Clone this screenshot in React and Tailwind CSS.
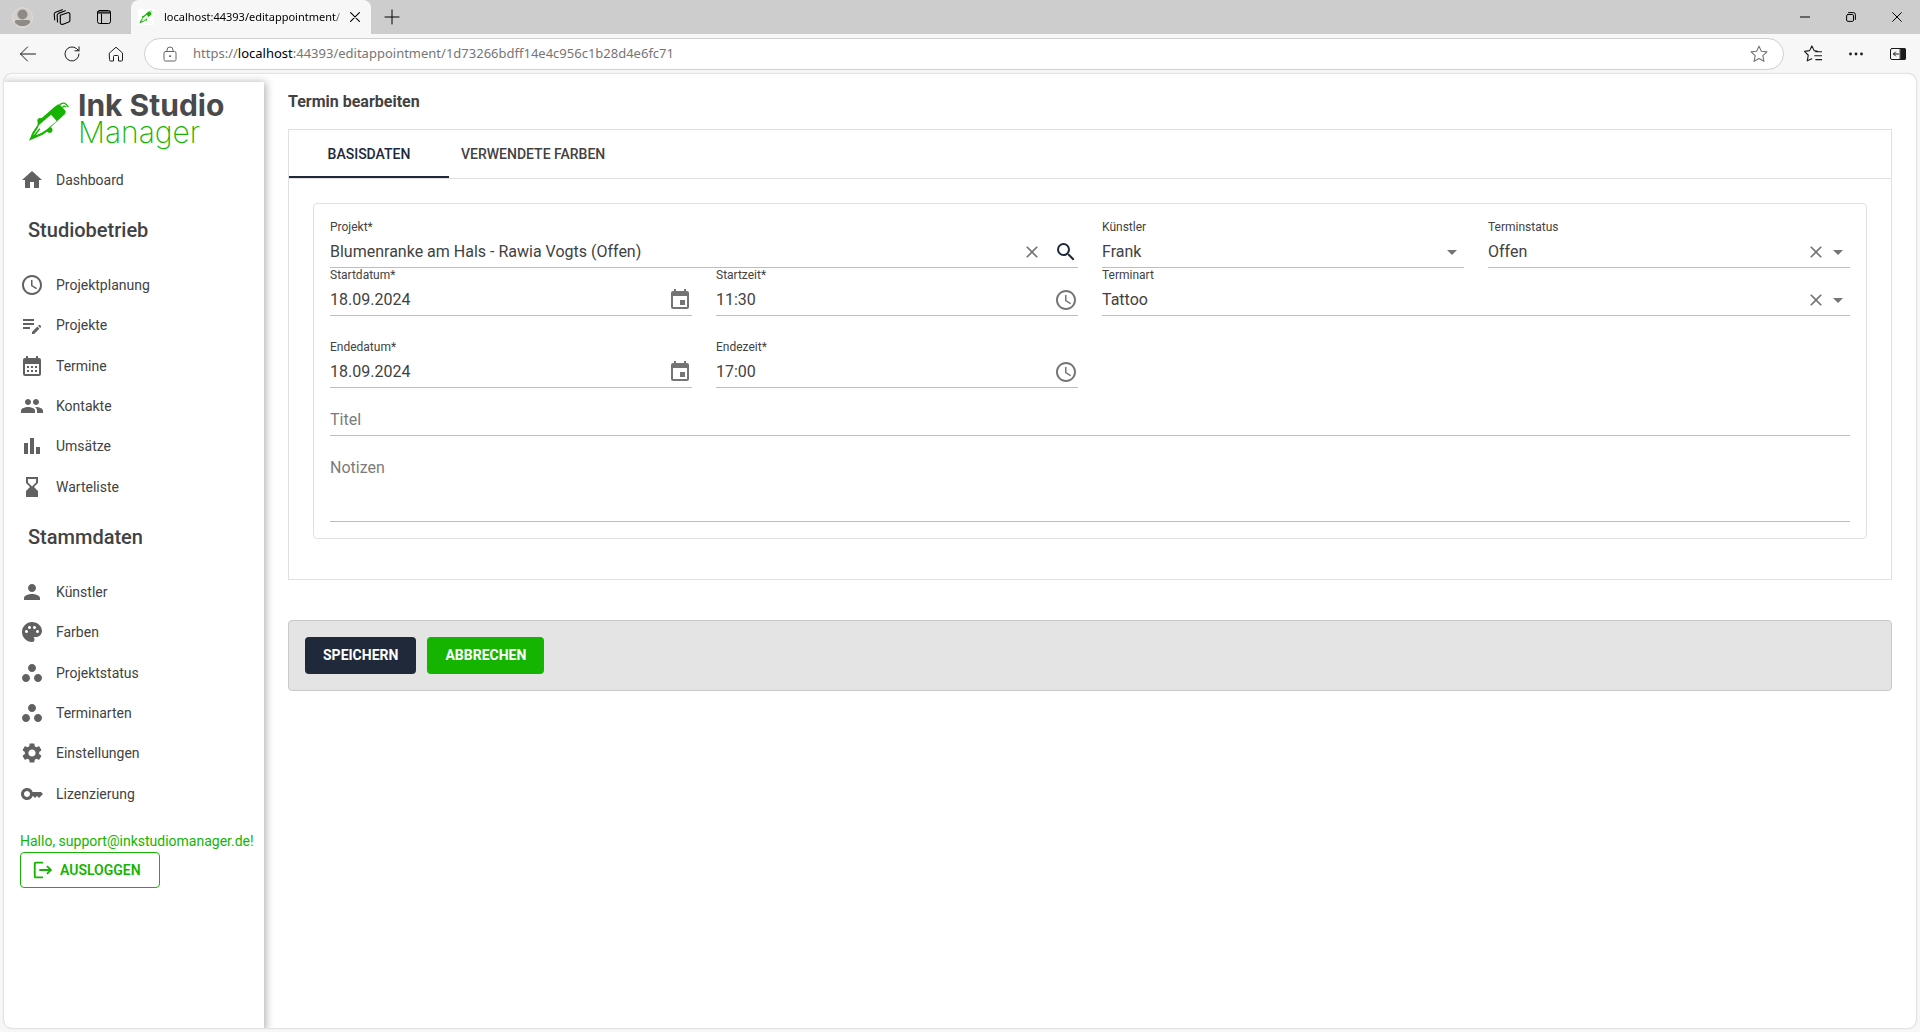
import React, { useState } from "react";
import {
  MdHome,
  MdAccessTime,
  MdEditNote,
  MdCalendarMonth,
  MdPeople,
  MdHourglassBottom,
  MdPerson,
  MdPalette,
  MdWorkspaces,
  MdSettings,
  MdKey,
  MdLogout,
  MdClear,
  MdSearch,
  MdEvent,
  MdArrowDropDown,
} from "react-icons/md";

function PenMark({ className }) {
  return (
    <svg viewBox="80 95 126 117" className={className} aria-hidden="true">
      <path fill="#14b400" d="M83 211l10-24 15-22 2-12 50-44 11-7 9 6 13 14-1 8-41 38-7 11-20 14z" />
      <circle cx="116" cy="151" r="8" fill="#14b400" />
      <circle cx="145" cy="179" r="8.500" fill="#14b400" />
      <path fill="#fff" d="M113 164l36-31 17 19-31 26-14 9-18 8 14-18-3-3-17 21-1-1 13-20z" />
      <path d="M174 107c2-9 14-11 20-5 4 3 6 5 7 9M184 112c2-5 6-6 11-2" fill="none" stroke="#14b400" strokeWidth="4" />
    </svg>
  );
}

function BarChartIcon({ className }) {
  return (
    <svg viewBox="0 0 24 24" fill="currentColor" className={className} aria-hidden="true">
      <path d="M4 9h4v11H4zM16 13h4v7h-4zM10 4h4v16h-4z" />
    </svg>
  );
}

function Stroke({ className, children, width = 1 }) {
  return (
    <svg
      viewBox="0 0 16 16"
      fill="none"
      stroke="currentColor"
      strokeWidth={width}
      strokeLinecap="round"
      strokeLinejoin="round"
      className={className}
      aria-hidden="true"
    >
      {children}
    </svg>
  );
}

const studio = [
  ["Projektplanung", MdAccessTime],
  ["Projekte", MdEditNote],
  ["Termine", MdCalendarMonth],
  ["Kontakte", MdPeople],
  ["Umsätze", BarChartIcon],
  ["Warteliste", MdHourglassBottom],
];

const masterData = [
  ["Künstler", MdPerson],
  ["Farben", MdPalette],
  ["Projektstatus", MdWorkspaces],
  ["Terminarten", MdWorkspaces],
  ["Einstellungen", MdSettings],
  ["Lizenzierung", MdKey],
];

function NavLink({ label, icon: Icon }) {
  return (
    <a href="#" className="flex min-h-10 items-center gap-3 pl-4 text-sm text-[#424242]">
      <Icon className="size-6 shrink-0 text-[#616161]" />
      <span>{label}</span>
    </a>
  );
}

function NavGroup({ title, items }) {
  return (
    <section>
      <h2 className="pt-[14px] pb-[19px] pl-6 text-xl leading-8 font-medium text-[#424242]">{title}</h2>
      <div className="grid min-h-[242px] auto-rows-fr">
        {items.map(([label, icon]) => (
          <NavLink key={label} label={label} icon={icon} />
        ))}
      </div>
    </section>
  );
}

function Sidebar() {
  return (
    <aside className="mt-2 w-[260px] shrink-0 bg-white shadow-[0_2px_8px_2px_rgba(0,0,0,0.3)]">
      <a href="#" aria-label="Ink Studio Manager" className="flex h-[78px] items-start gap-2 pt-[10px] pl-6">
        <PenMark className="mt-[10px] h-[39px] w-[42px]" />
        <span className="flex flex-col font-['Inter',sans-serif] text-[30px] leading-[27px]">
          <span className="font-bold text-[#4a4a4c]">Ink Studio</span>
          <span className="font-extralight text-[#14b400]">Manager</span>
        </span>
      </a>
      <nav aria-label="Hauptmenü">
        <NavLink label="Dashboard" icon={MdHome} />
        <NavGroup title="Studiobetrieb" items={studio} />
        <NavGroup title="Stammdaten" items={masterData} />
      </nav>
      <div className="pt-4 pl-4 text-[#14b400]">
        <p className="text-sm leading-[22px] whitespace-nowrap">Hallo, support@inkstudiomanager.de!</p>
        <button type="button" className="flex h-9 items-center gap-[6px] rounded border border-[#14b400] pr-[18px] pl-[11px] text-sm font-semibold">
          <MdLogout className="size-[22px]" />
          AUSLOGGEN
        </button>
      </div>
    </aside>
  );
}

function Field({ id, label, children, className = "" }) {
  return (
    <div className={`flex h-12 flex-col border-b border-[#bdbdbd] ${className}`}>
      <label htmlFor={id} className="h-[14px] text-xs leading-[14px]">
        {label}
      </label>
      <div className="flex h-[33px] items-center pt-[2px]">{children}</div>
    </div>
  );
}

function TextInput(props) {
  return <input {...props} className="h-full min-w-0 flex-1 bg-transparent text-base outline-none" />;
}

function IconButton({ label, onClick, children }) {
  return (
    <button type="button" aria-label={label} onClick={onClick} className="flex shrink-0 items-center justify-center text-[#757575]">
      {children}
    </button>
  );
}

function SelectField({ id, label, options, clearable, className }) {
  const [value, setValue] = useState(options[0]);
  return (
    <Field id={id} label={label} className={className}>
      <select
        id={id}
        value={value}
        onChange={(e) => setValue(e.target.value)}
        className="h-full min-w-0 flex-1 appearance-none bg-transparent text-base outline-none"
      >
        <option value=""></option>
        {options.map((o) => (
          <option key={o}>{o}</option>
        ))}
      </select>
      {clearable && (
        <IconButton label={`${label} leeren`} onClick={() => setValue("")}>
          <MdClear className="size-5" />
        </IconButton>
      )}
      <MdArrowDropDown className="pointer-events-none size-6 shrink-0 text-[#757575]" />
    </Field>
  );
}

function AppointmentForm() {
  const [project, setProject] = useState("Blumenranke am Hals - Rawia Vogts (Offen)");
  return (
    <div className="grid grid-cols-4 gap-x-6 rounded border border-[#e0e0e0] p-4">
      <Field id="project" label="Projekt*" className="col-span-2">
        <TextInput id="project" value={project} onChange={(e) => setProject(e.target.value)} />
        <div className="flex items-center gap-3">
          <IconButton label="Projekt leeren" onClick={() => setProject("")}>
            <MdClear className="size-5" />
          </IconButton>
          <IconButton label="Projekt suchen">
            <MdSearch className="size-6 text-[#20293a]" />
          </IconButton>
        </div>
      </Field>
      <SelectField id="artist" label="Künstler" options={["Frank"]} />
      <SelectField id="status" label="Terminstatus" options={["Offen"]} clearable />

      <Field id="start-date" label="Startdatum*">
        <TextInput id="start-date" defaultValue="18.09.2024" />
        <IconButton label="Startdatum wählen">
          <MdEvent className="size-6" />
        </IconButton>
      </Field>
      <Field id="start-time" label="Startzeit*">
        <TextInput id="start-time" defaultValue="11:30" />
        <IconButton label="Startzeit wählen">
          <MdAccessTime className="size-6" />
        </IconButton>
      </Field>
      <SelectField id="kind" label="Terminart" options={["Tattoo"]} clearable className="col-span-2" />

      <Field id="end-date" label="Endedatum*" className="mt-6">
        <TextInput id="end-date" defaultValue="18.09.2024" />
        <IconButton label="Endedatum wählen">
          <MdEvent className="size-6" />
        </IconButton>
      </Field>
      <Field id="end-time" label="Endezeit*" className="mt-6">
        <TextInput id="end-time" defaultValue="17:00" />
        <IconButton label="Endezeit wählen">
          <MdAccessTime className="size-6" />
        </IconButton>
      </Field>

      <input
        aria-label="Titel"
        placeholder="Titel"
        className="col-span-4 h-12 border-b border-[#bdbdbd] pt-4 text-base outline-none placeholder:text-[#7b7b7b]"
      />
      <textarea
        aria-label="Notizen"
        placeholder="Notizen"
        className="col-span-4 h-[86px] resize-none border-b border-[#bdbdbd] pt-5 text-base outline-none placeholder:text-[#7b7b7b]"
      />
    </div>
  );
}

function Editor() {
  return (
    <main className="min-w-0 flex-1 px-6 pt-4">
      <h1 className="text-base leading-6 font-bold">Termin bearbeiten</h1>
      <section className="mt-[15px] border border-[#e0e0e0] pb-4">
        <div role="tablist" className="flex h-[49px] border-b border-[#e0e0e0] text-sm font-medium">
          <button type="button" role="tab" aria-selected="true" className="min-w-40 border-b-2 border-[#20293a] px-3 pt-[2px] text-[#20293a]">
            BASISDATEN
          </button>
          <button type="button" role="tab" aria-selected="false" className="min-w-40 px-3">
            VERWENDETE FARBEN
          </button>
        </div>
        <div className="p-6">
          <AppointmentForm />
        </div>
      </section>
      <div className="mt-10 flex gap-[11px] rounded border border-[#c8c8c8] bg-[#e4e4e4] p-4 text-sm font-bold text-white">
        <button type="button" className="h-[37px] rounded bg-[#20293a] px-[18px] pb-[2px]">
          SPEICHERN
        </button>
        <button type="button" className="h-[37px] rounded bg-[#14b400] px-[18px] pb-[2px]">
          ABBRECHEN
        </button>
      </div>
    </main>
  );
}

function TabStrip() {
  return (
    <div className="flex h-[34px] items-center bg-[#cdcdcd] text-black">
      <div className="flex w-[131px] items-center gap-5 pl-3">
        <svg viewBox="0 0 21 21" className="size-[21px]" role="img" aria-label="Profil">
          <circle cx="10.500" cy="10.500" r="10" fill="#d3d0cc" stroke="#dedbd7" />
          <circle cx="10.500" cy="7.500" r="5" fill="#8f8a86" />
          <path d="M2.800 15.500c0-2 1-2.500 2.500-2.500h10.400c1.500 0 2.500.5 2.500 2.500A10 10 0 0 1 2.800 15.500z" fill="#8f8a86" />
        </svg>
        <button type="button" aria-label="Arbeitsbereiche">
          <Stroke className="size-[18px]">
            <path d="M6.500 6.500l6.500-2.300q2-.4 2 1.300v5.500q0 1-1 1.400l-5 2q-2 .6-2.500-1zM4 12.500l-.3-6q0-1.200 1.200-1.700l6-2.300M1.500 10.500l-.4-5q0-1.200 1.200-1.700l6-2.300" />
          </Stroke>
        </button>
        <button type="button" aria-label="Tab-Aktionen" className="ml-[5px]">
          <Stroke className="size-4">
            <rect x="1.500" y="1.500" width="13" height="13" rx="2" />
            <path d="M1.500 3h13M1.500 4h13M5.500 5v9" />
          </Stroke>
        </button>
      </div>
      <div className="flex h-full w-60 items-center rounded-t-lg bg-[#f7f7f7] pr-2 pl-[7px]">
        <span className="flex size-4 items-center justify-center bg-white">
          <PenMark className="size-[14px]" />
        </span>
        <span className="ml-[10px] min-w-0 flex-1 mask-r-from-95% font-['Noto_Sans',sans-serif] text-[11px] whitespace-nowrap">
          localhost:44393/editappointment/
        </span>
        <button type="button" aria-label="Tab schließen" className="ml-1 p-[3px]">
          <Stroke className="size-[10px]" width={1.8}>
            <path d="M1 1l14 14M15 1L1 15" />
          </Stroke>
        </button>
      </div>
      <button type="button" aria-label="Neuer Tab" className="ml-[13px]">
        <Stroke className="size-4">
          <path d="M8 1v14M1 8h14" />
        </Stroke>
      </button>
      <div className="ml-auto flex items-center gap-9 pr-[18px]">
        <button type="button" aria-label="Minimieren">
          <Stroke className="size-[10px]" width={1.6}>
            <path d="M0 8h16" />
          </Stroke>
        </button>
        <button type="button" aria-label="Verkleinern">
          <Stroke className="size-[10px]" width={1.6}>
            <rect x="1" y="4" width="11" height="11" rx="2" />
            <path d="M4 1h8q3 0 3 3v8" />
          </Stroke>
        </button>
        <button type="button" aria-label="Schließen">
          <Stroke className="size-[10px]" width={1.6}>
            <path d="M1 1l14 14M15 1L1 15" />
          </Stroke>
        </button>
      </div>
    </div>
  );
}

function Toolbar() {
  return (
    <div className="flex h-10 items-center text-[#1b1b1b]">
      <div className="flex w-36 items-center gap-7 pl-5">
        <button type="button" aria-label="Zurück">
          <Stroke className="size-4">
            <path d="M15.500 8H.5M7.500 1L.5 8l7 7" />
          </Stroke>
        </button>
        <button type="button" aria-label="Neu laden">
          <Stroke className="size-4">
            <path d="M15 8A7 7 0 1 1 12.500 2.600L15 4.800M15 .8v4h-4" />
          </Stroke>
        </button>
        <button type="button" aria-label="Startseite">
          <Stroke className="size-4">
            <path d="M1.500 7L8 1.200 14.500 7v7q0 1-1 1h-3v-4.500q0-1-1-1h-3q-1 0-1 1V15h-3q-1 0-1-1z" />
          </Stroke>
        </button>
      </div>
      <div className="flex h-8 flex-1 items-center rounded-full border border-[#cfcfcf] bg-white pr-[15px] pl-[17px]">
        <Stroke className="size-4 shrink-0 text-[#666]">
          <rect x="2" y="5.500" width="12" height="9.500" rx="1.500" />
          <path d="M5 5.500V4a3 3 0 0 1 6 0v1.500" />
          <circle cx="8" cy="10.200" r=".6" fill="currentColor" />
        </Stroke>
        <div className="ml-[15px] min-w-0 flex-1 font-['Noto_Sans',sans-serif] text-[13px] whitespace-nowrap text-[#767676]">
          https://<span className="text-black">localhost</span>:44393/editappointment/1d73266bdff14e4c956c1b28d4e6fc71
        </div>
        <button type="button" aria-label="Favorit hinzufügen" className="text-[#767676]">
          <Stroke className="size-[18px]">
            <path d="M8 1l2.100 4.600 5 .5-3.700 3.400 1 5L8 12l-4.400 2.500 1-5L.9 6.100l5-.5z" />
          </Stroke>
        </button>
      </div>
      <div className="flex items-center gap-[26px] pr-[14px] pl-5">
        <button type="button" aria-label="Favoriten">
          <Stroke className="size-[18px]">
            <path d="M12 5.500l-3-.5L7 .8 5 5l-4.500.7 3.300 3.400-.9 5L7 12.200M10.500 6H16M9.500 9.500H16M10.500 13H16" />
          </Stroke>
        </button>
        <button type="button" aria-label="Weitere Optionen">
          <svg viewBox="0 0 16 16" className="size-4" fill="currentColor" aria-hidden="true">
            <circle cx="2.500" cy="8" r="1.400" />
            <circle cx="8" cy="8" r="1.400" />
            <circle cx="13.500" cy="8" r="1.400" />
          </svg>
        </button>
        <button type="button" aria-label="Seitenleiste">
          <Stroke className="size-4">
            <rect x=".5" y="2.500" width="15" height="11" rx="1.500" />
            <path d="M10.500 2.500h4q1 0 1 1v9q0 1-1 1h-4z" fill="currentColor" />
            <path d="M8.500 8h-5M5.500 6l-2 2 2 2" />
          </Stroke>
        </button>
      </div>
    </div>
  );
}

export default function App() {
  return (
    <div className="flex min-h-screen flex-col bg-[#f7f7f7] font-['Roboto',sans-serif] text-[#424242]">
      <TabStrip />
      <Toolbar />
      <div className="mx-1 mb-1 flex flex-1 overflow-hidden rounded-lg bg-white shadow-[0_0_2px_rgba(0,0,0,0.3)]">
        <Sidebar />
        <Editor />
      </div>
    </div>
  );
}
